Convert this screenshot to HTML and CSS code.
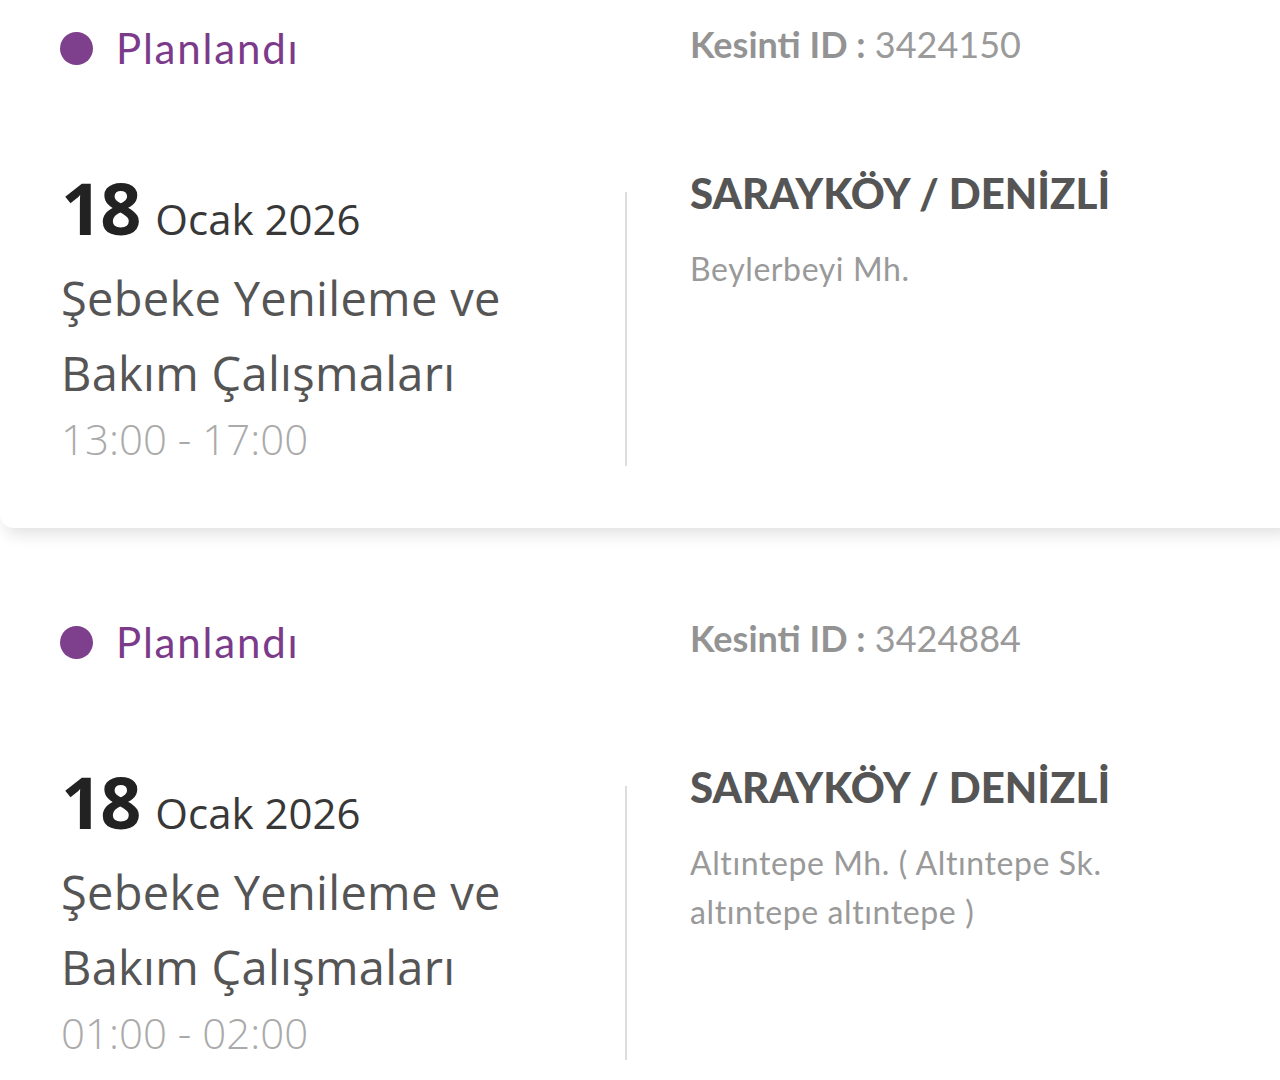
FILE: index.html
```html
<!DOCTYPE html>
<html lang="tr">
<head>
  <meta charset="UTF-8">
  <meta name="viewport" content="width=device-width, initial-scale=1.0">
  <title>Planlı Kesintiler</title>
  <link rel="stylesheet" href="styles.css">
</head>
<body>

  <div class="outage-list">

    <div class="outage-card">
      <div class="status">
        <span class="status-dot"></span>
        <span class="status-text">Planlandı</span>
      </div>
      <div class="outage-id"><span class="id-label">Kesinti ID :</span> 3424150</div>

      <div class="when">
        <div class="date"><span class="day">18</span> <span class="month">Ocak 2026</span></div>
        <div class="reason">Şebeke Yenileme ve Bakım Çalışmaları</div>
        <div class="hours">13:00 - 17:00</div>
      </div>
      <div class="divider"></div>
      <div class="where">
        <div class="city">SARAYKÖY / DENİZLİ</div>
        <div class="address">Beylerbeyi Mh.</div>
      </div>
    </div>

    <div class="outage-card">
      <div class="status">
        <span class="status-dot"></span>
        <span class="status-text">Planlandı</span>
      </div>
      <div class="outage-id"><span class="id-label">Kesinti ID :</span> 3424884</div>

      <div class="when">
        <div class="date"><span class="day">18</span> <span class="month">Ocak 2026</span></div>
        <div class="reason">Şebeke Yenileme ve Bakım Çalışmaları</div>
        <div class="hours">01:00 - 02:00</div>
      </div>
      <div class="divider"></div>
      <div class="where">
        <div class="city">SARAYKÖY / DENİZLİ</div>
        <div class="address">Altıntepe Mh. ( Altıntepe Sk. altıntepe altıntepe )</div>
      </div>
    </div>

  </div>

</body>
</html>
```

FILE: styles.css
```css
html, body {
  margin: 0;
  padding: 0;
  background-color: #fff;
  font-family: "Open Sans", Arial, sans-serif;
}

body {
  overflow: hidden;
  height: 1080px;
}

.outage-list {
  display: flex;
  flex-direction: column;
  gap: 30px;
  margin-top: -36px; /* liste biraz kaydırılmış gibi */
}

.outage-card {
  background-color: #fff;
  border-radius: 14px;
  box-shadow: 0 12px 16px -6px rgba(0, 0, 0, 0.12);
  padding: 56px 0 62px 60px;
  margin-right: -20px;
  display: grid;
  grid-template-columns: 565px 2px 1fr;
  grid-template-rows: 56px auto;
  row-gap: 91px;
}

/* üst satır */
.status {
  grid-column: 1;
  display: flex;
  align-items: center;
  gap: 23px;
}

.status-dot {
  width: 33px;
  height: 33px;
  border-radius: 50%;
  background-color: #7e3f8c;
}

.status-text {
  font-family: Lato, "Open Sans", sans-serif;
  font-size: 42px;
  line-height: 56px;
  letter-spacing: 1.8px;
  color: #7b3b8a;
}

.outage-id {
  grid-column: 3;
  padding-left: 63px;
  font-family: Lato, "Open Sans", sans-serif;
  font-size: 36px;
  line-height: 48px;
  color: #9a9a9a;
}

.id-label {
  font-weight: 700;
  color: #939393;
}

/* sol sütun */
.when {
  grid-column: 1;
  padding-left: 1px;
}

.date {
  height: 80px;
  display: flex;
  align-items: baseline;
  gap: 16px;
  color: #222;
}

.day {
  font-size: 72px;
  font-weight: 700;
  line-height: 80px;
  letter-spacing: -2px;
}

.month {
  font-size: 42px;
  color: #383838;
}

.reason {
  font-size: 47px;
  line-height: 75px;
  color: #555;
  width: 510px;
  margin-top: 14px;
  letter-spacing: 0.3px;
}

.hours {
  font-size: 42px;
  line-height: 55px;
  color: #aaa;
  font-weight: 300;
}

.divider {
  grid-column: 2;
  background-color: #ddd;
  margin-top: 25px;
}

/* sağ sütun */
.where {
  grid-column: 3;
  padding-left: 63px;
  font-family: Lato, "Open Sans", sans-serif;
}

.city {
  font-size: 42px;
  line-height: 52px;
  font-weight: 900;
  color: #555;
}

.address {
  margin-top: 25px;
  font-size: 32px;
  line-height: 49px;
  letter-spacing: 0.6px;
  color: #999;
  width: 440px;
}
```
